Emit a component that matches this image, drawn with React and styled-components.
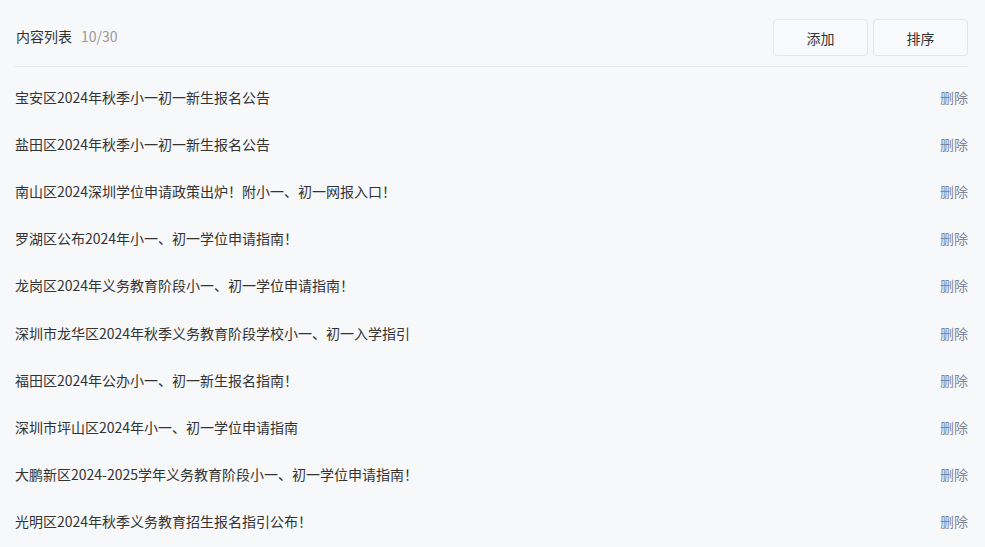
import React from 'react';
import styled, { createGlobalStyle } from 'styled-components';

const GlobalStyle = createGlobalStyle`
  html, body {
    margin: 0;
    padding: 0;
    background: #f7f8fa;
  }
  body {
    font-family: "Noto Sans CJK SC", "Noto Sans", sans-serif;
    color: #333;
  }
`;

const items = [
  '宝安区2024年秋季小一初一新生报名公告',
  '盐田区2024年秋季小一初一新生报名公告',
  '南山区2024深圳学位申请政策出炉！附小一、初一网报入口！',
  '罗湖区公布2024年小一、初一学位申请指南！',
  '龙岗区2024年义务教育阶段小一、初一学位申请指南！',
  '深圳市龙华区2024年秋季义务教育阶段学校小一、初一入学指引',
  '福田区2024年公办小一、初一新生报名指南！',
  '深圳市坪山区2024年小一、初一学位申请指南',
  '大鹏新区2024-2025学年义务教育阶段小一、初一学位申请指南！',
  '光明区2024年秋季义务教育招生报名指引公布！',
];

const App = () => {
  return (
    <Page>
      <GlobalStyle />
      <Header>
        <Title>
          内容列表<Count>{items.length}/30</Count>
        </Title>
        <Actions>
          <ActionButton>添加</ActionButton>
          <ActionButton>排序</ActionButton>
        </Actions>
      </Header>
      <List>
        {items.map((item) => (
          <Row key={item}>
            <RowText>{item}</RowText>
            <DeleteLink>删除</DeleteLink>
          </Row>
        ))}
      </List>
    </Page>
  );
};

export default App;

const Page = styled.div`
  padding: 0 17px 0 15px;
  min-height: 547px;
  box-sizing: border-box;
`;
const Header = styled.div`
  display: flex;
  align-items: center;
  justify-content: space-between;
  padding: 19px 0 10px;
  border-bottom: 1px solid #e4e6ea;
`;
const Title = styled.div`
  font-size: 14px;
  color: #333;
  padding-left: 1px;
  margin-top: -3px;
`;
const Count = styled.span`
  margin-left: 9px;
  color: #999;
`;
const Actions = styled.div`
  display: flex;
  gap: 5px;
`;
const ActionButton = styled.button`
  width: 95px;
  height: 37px;
  border: 1px solid #e3e5e8;
  border-radius: 4px;
  background: #f8f9fb;
  font-family: inherit;
  font-size: 14px;
  color: #333;
  cursor: pointer;
`;
const List = styled.div`
  padding-top: 6px;
`;
const Row = styled.div`
  display: flex;
  align-items: center;
  justify-content: space-between;
  height: 47.2px;
`;
const RowText = styled.div`
  font-size: 14px;
  color: #333;
`;
const DeleteLink = styled.a`
  font-size: 14px;
  color: #7d869c;
  cursor: pointer;
`;
